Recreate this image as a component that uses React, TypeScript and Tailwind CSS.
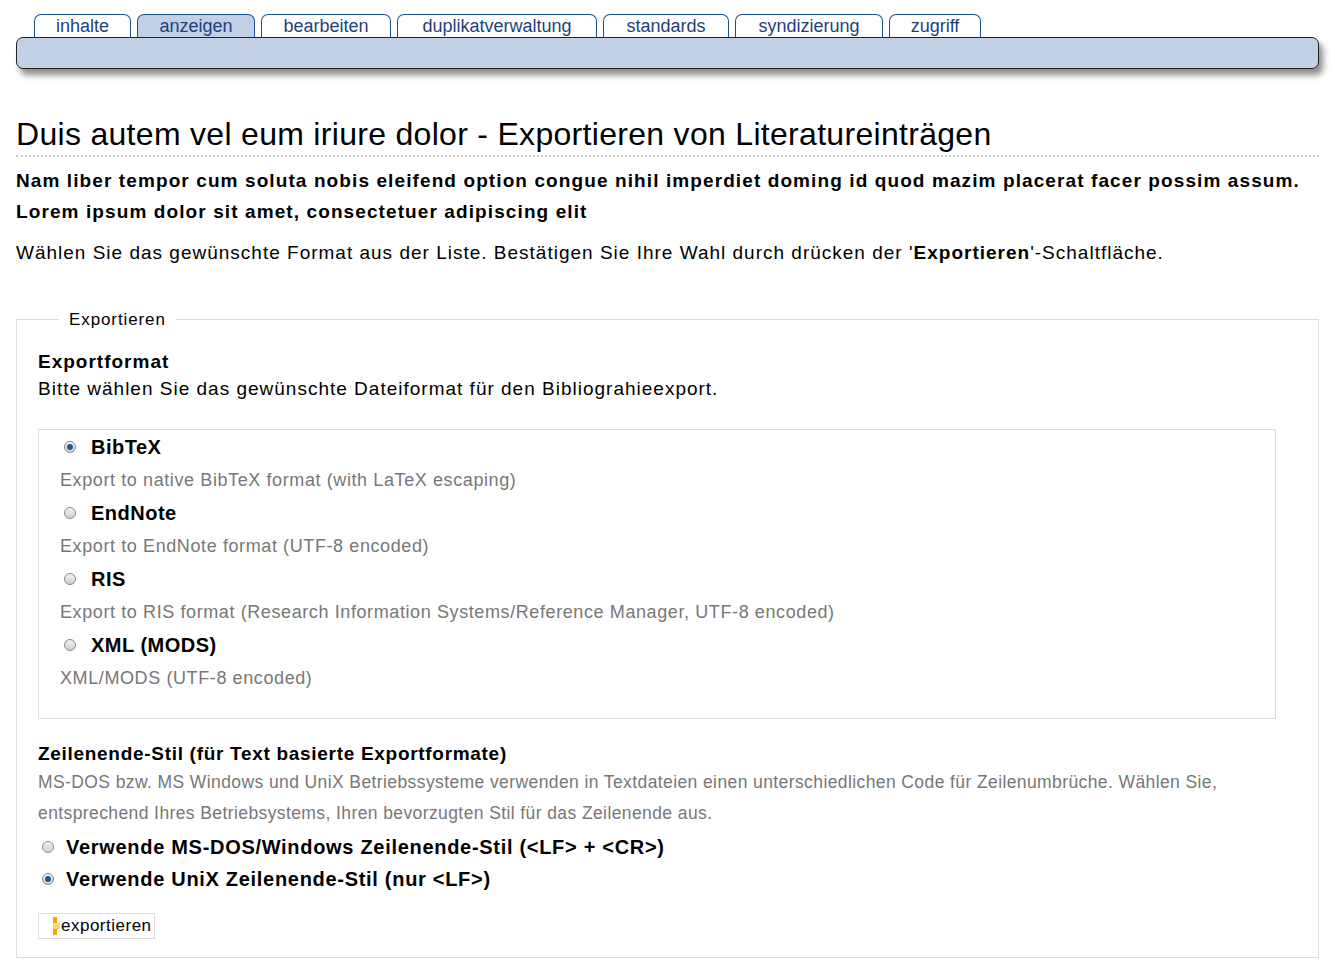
import React from "react";

const tabs = ["inhalte","anzeigen","bearbeiten","duplikatverwaltung","standards","syndizierung","zugriff"];
const widths = [97,118,130,200,126,148,92];

function Radio({ on }: { on?: boolean }) {
  return (
    <span className="inline-flex items-center justify-center w-[12px] h-[12px] rounded-full border border-[#8a8a8a] bg-gradient-to-b from-[#f4f4f4] to-[#cfcfcf] shrink-0">
      {on && <span className="w-[6px] h-[6px] rounded-full bg-[#1a5a96]" />}
    </span>
  );
}

const formats = [
  ["BibTeX","Export to native BibTeX format (with LaTeX escaping)",true],
  ["EndNote","Export to EndNote format (UTF-8 encoded)",false],
  ["RIS","Export to RIS format (Research Information Systems/Reference Manager, UTF-8 encoded)",false],
  ["XML (MODS)","XML/MODS (UTF-8 encoded)",false],
] as const;

export default function App() {
  return (
    <div className="bg-white min-h-[978px] text-black px-[16px] pt-[14px]" style={{ fontFamily: '"Liberation Sans", Arial, sans-serif' }}>
      <div className="flex gap-[6px] pl-[18px]">
        {tabs.map((t, i) => (
          <div key={t} style={{ width: widths[i] }} className={`h-[23px] border border-b-0 border-[#1b4f95] rounded-t-[7px] flex items-center justify-center text-[18px] text-[#1f3f7c] ${i === 1 ? "bg-[#c2d0e6]" : "bg-white"}`}>{t}</div>
        ))}
      </div>
      <div className="h-[32px] bg-[#c2d0e6] border border-[#222] rounded-[7px] shadow-[4px_6px_6px_rgba(0,0,0,0.45)]" />
      <h1 className="mt-[46px] text-[32px] tracking-[0.3px] leading-[38px] pb-[2px] border-b-2 border-dotted border-[#ccc]">Duis autem vel eum iriure dolor - Exportieren von Literatureinträgen</h1>
      <p className="mt-[8px] text-[19px] tracking-[1.1px] leading-[31px] font-bold">Nam liber tempor cum soluta nobis eleifend option congue nihil imperdiet doming id quod mazim placerat facer possim assum. Lorem ipsum dolor sit amet, consectetuer adipiscing elit</p>
      <p className="mt-[14px] text-[19px] tracking-[1px] leading-[24px]">Wählen Sie das gewünschte Format aus der Liste. Bestätigen Sie Ihre Wahl durch drücken der '<b>Exportieren</b>'-Schaltfläche.</p>
      <fieldset className="mt-[42px] border border-[#ddd] pl-[21px] pr-[42px] pb-[18px] mb-[20px]">
        <legend className="ml-[21px] px-[10px] text-[17px] tracking-[0.9px]">Exportieren</legend>
        <div className="mt-[16px] text-[19px] tracking-[1px] font-bold leading-[26px]">Exportformat</div>
        <div className="text-[19px] tracking-[1px] leading-[28px]">Bitte wählen Sie das gewünschte Dateiformat für den Bibliograhieexport.</div>
        <div className="mt-[26px] border border-[#ddd] pl-[21px] pt-[2px] pb-[22px]">
          {formats.map(([n, d, on]) => (
            <div key={n}>
              <div className="flex items-center gap-[15px] pl-[4px] h-[30px]"><Radio on={on} /><span className="text-[20px] tracking-[0.5px] font-bold">{n}</span></div>
              <div className="text-[18px] tracking-[0.6px] text-[#777] leading-[36px]">{d}</div>
            </div>
          ))}
        </div>
        <div className="mt-[22px] text-[19px] tracking-[0.7px] font-bold leading-[26px]">Zeilenende-Stil (für Text basierte Exportformate)</div>
        <div className="text-[17.5px] tracking-[0.4px] text-[#777] leading-[31px]">MS-DOS bzw. MS Windows und UniX Betriebssysteme verwenden in Textdateien einen unterschiedlichen Code für Zeilenumbrüche. Wählen Sie, entsprechend Ihres Betriebsystems, Ihren bevorzugten Stil für das Zeilenende aus.</div>
        <div className="mt-[2px] flex items-center gap-[12px] pl-[4px] h-[32px]"><Radio /><span className="text-[20px] tracking-[0.7px] font-bold">Verwende MS-DOS/Windows Zeilenende-Stil (&lt;LF&gt; + &lt;CR&gt;)</span></div>
        <div className="flex items-center gap-[12px] pl-[4px] h-[32px]"><Radio on /><span className="text-[20px] tracking-[0.7px] font-bold">Verwende UniX Zeilenende-Stil (nur &lt;LF&gt;)</span></div>
        <div className="mt-[18px] inline-flex items-center border border-[#ddd] h-[26px] pl-[14px] pr-[2px] text-[17px] tracking-[0.5px]">
          <span className="flex flex-col w-[7px] mr-[1px]"><span className="h-[6px] w-[4px] bg-[#f7a800]" /><span className="h-[6px] w-[7px] bg-[#ffd57a]" /><span className="h-[6px] w-[4px] bg-[#f7a800]" /></span>
          exportieren
        </div>
      </fieldset>
    </div>
  );
}
